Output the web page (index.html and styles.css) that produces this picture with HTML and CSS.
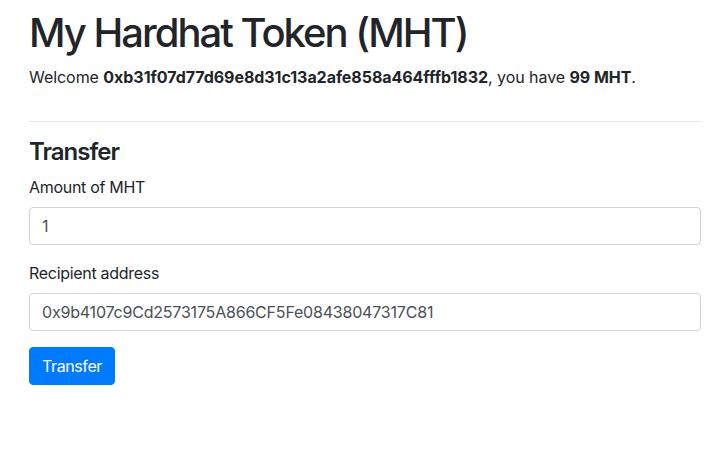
FILE: index.html
```html
<!DOCTYPE html>
<html>
<head>
<meta charset="utf-8">
<link rel="stylesheet" href="styles.css">
</head>
<body>
<div class="container">
  <div class="header">
    <h1 class="title">My Hardhat Token (MHT)</h1>
    <p class="welcome">Welcome <b>0xb31f07d77d69e8d31c13a2afe858a464fffb1832</b>, you have <b>99 MHT</b>.</p>
  </div>
  <hr class="divider">
  <h4 class="section-title">Transfer</h4>
  <form class="transfer-form">
    <div class="form-group">
      <label class="form-label">Amount of MHT</label>
      <input class="form-control" type="text" value="1">
    </div>
    <div class="form-group">
      <label class="form-label">Recipient address</label>
      <input class="form-control" type="text" value="0x9b4107c9Cd2573175A866CF5Fe08438047317C81">
    </div>
    <button class="btn-primary" type="button">Transfer</button>
  </form>
</div>
</body>
</html>
```
FILE: styles.css
```css
* { box-sizing: border-box; }
html, body { margin: 0; padding: 0; background: #fff; }
body {
  font-family: Inter, "Liberation Sans", sans-serif;
  font-size: 16px;
  line-height: 1.5;
  color: #212529;
}
.container {
  padding: 9px 18px 0 29px;
}
.header {
  display: flex;
  flex-direction: column;
}
.title {
  font-size: 40px;
  font-weight: 500;
  line-height: 1.2;
  letter-spacing: -2px;
  margin: 0 0 8px;
}
.welcome { margin: 0 0 16px; letter-spacing: -0.05px; }
.welcome b { font-weight: 700; }
.divider {
  border: 0;
  border-top: 1px solid rgba(0,0,0,0.1);
  margin: 16px 0;
}
.section-title {
  font-size: 24px;
  font-weight: 600;
  line-height: 1.2;
  letter-spacing: -1px;
  margin: 0 0 8px;
}
.transfer-form { margin: 0; }
.form-group { margin-bottom: 16px; }
.form-label { display: inline-block; margin-bottom: 8px; letter-spacing: -0.3px; }
.form-control {
  display: block;
  width: 100%;
  height: 38px;
  padding: 6px 12px;
  font: inherit;
  letter-spacing: -0.2px;
  color: #495057;
  background: #fff;
  border: 1px solid #ced4da;
  border-radius: 4px;
}
.btn-primary {
  display: inline-block;
  font: inherit;
  letter-spacing: -0.4px;
  color: #fff;
  background: #007bff;
  border: 1px solid #007bff;
  border-radius: 4px;
  padding: 6px 12px;
  line-height: 1.5;
}
```
